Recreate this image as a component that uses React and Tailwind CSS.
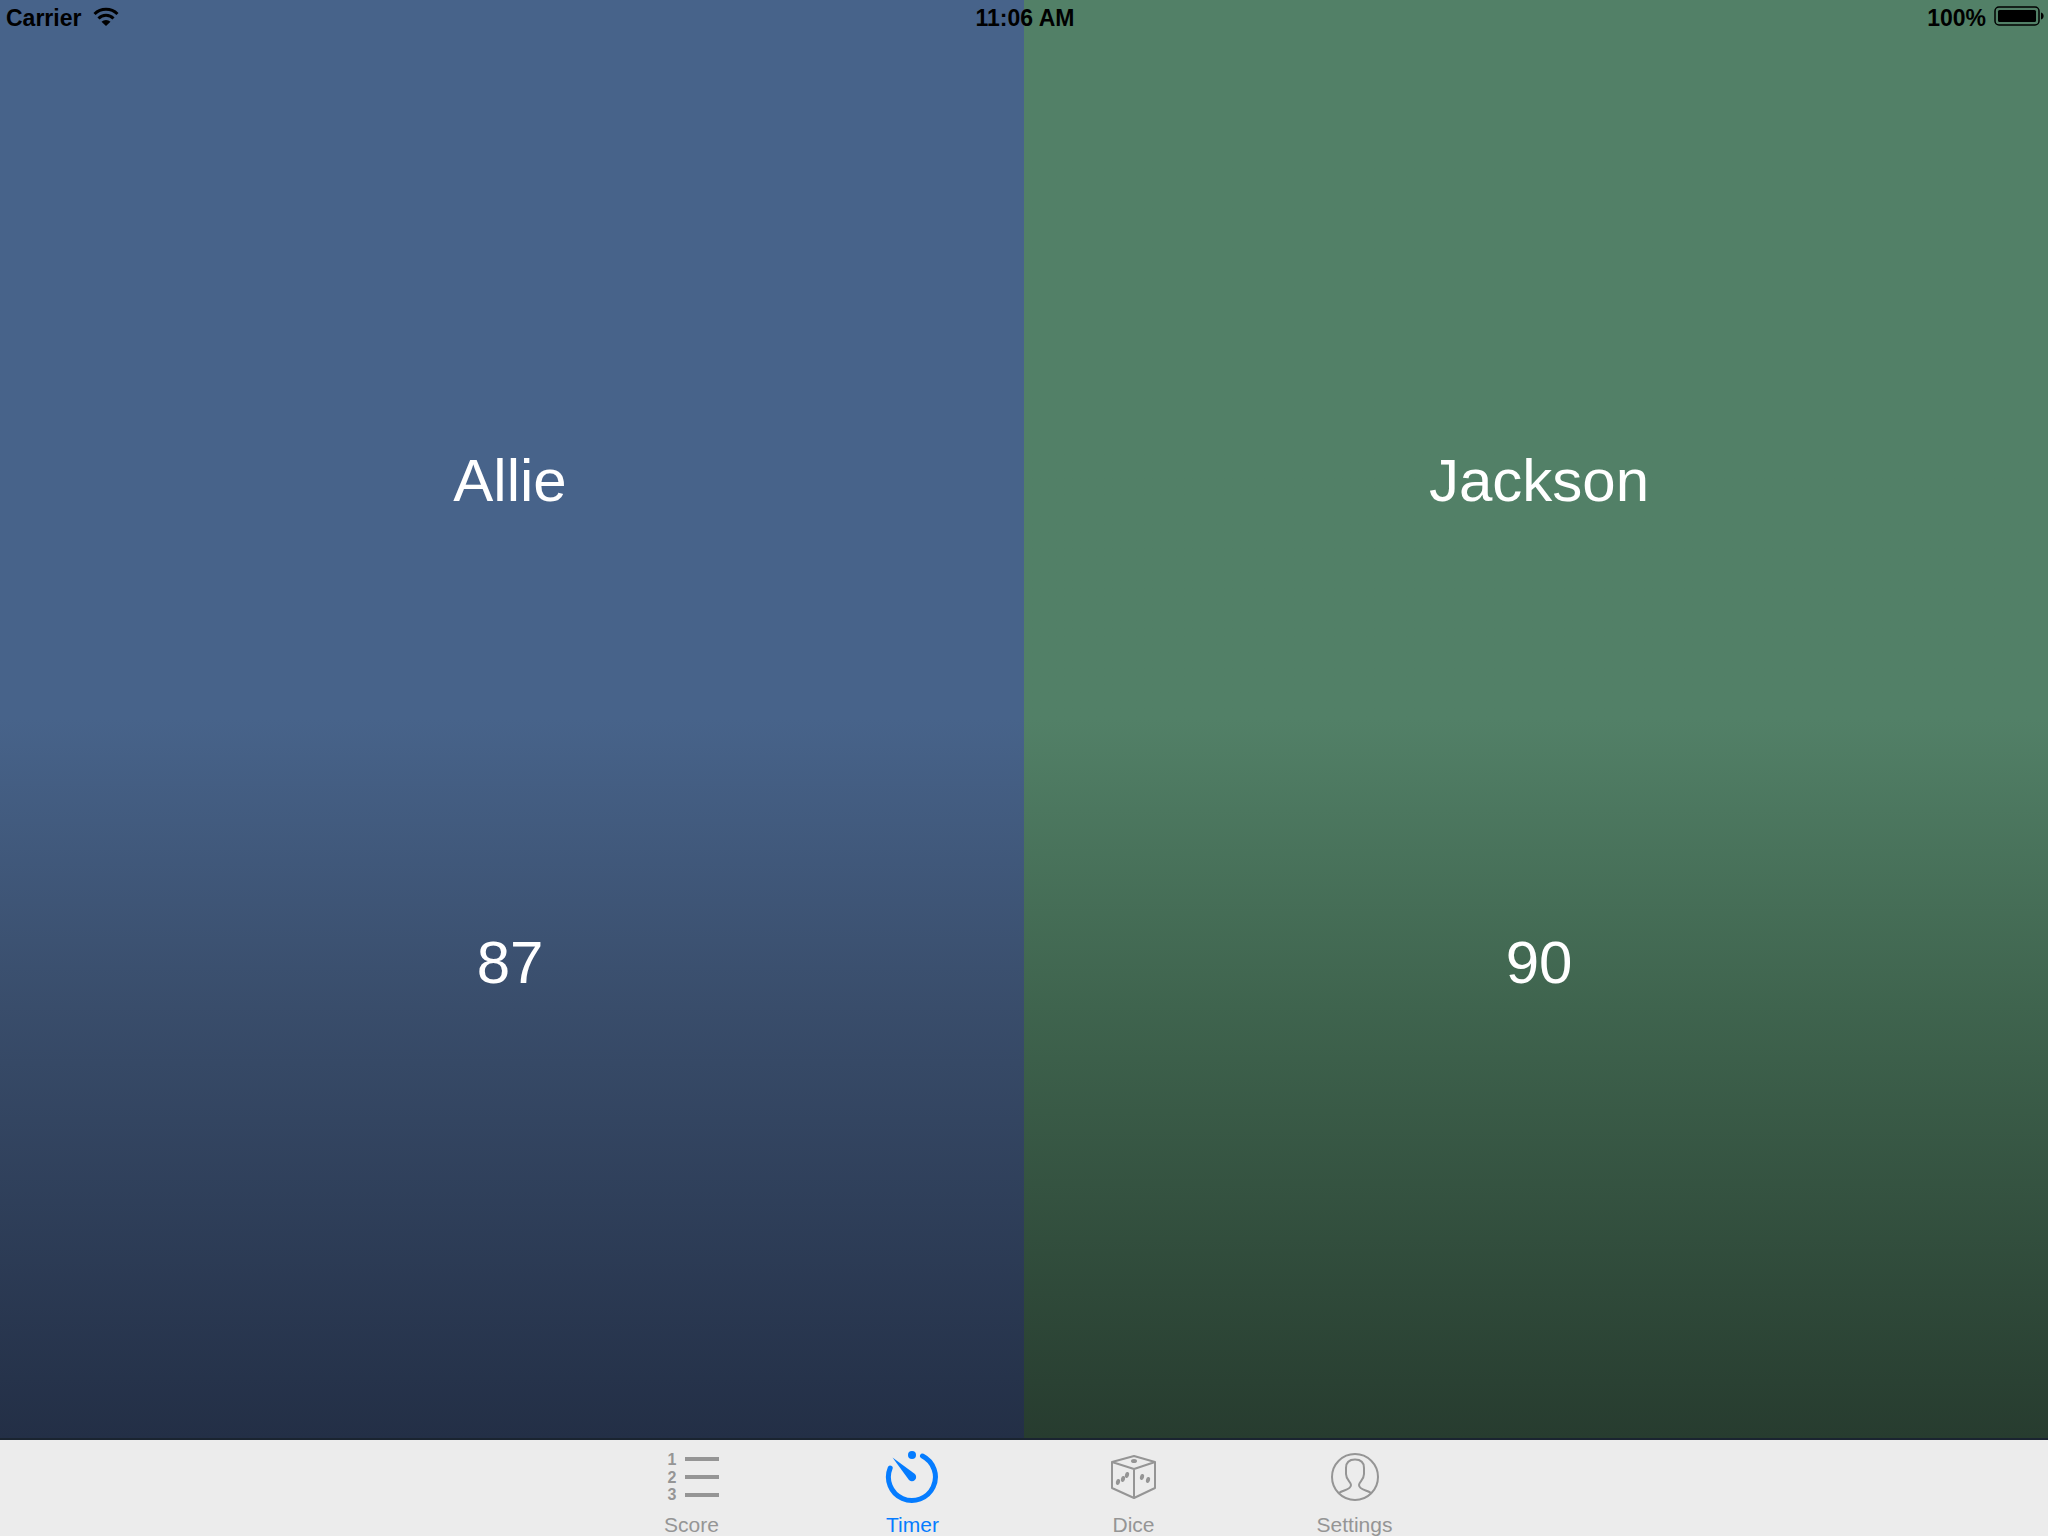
import React, { useState } from "react";

const players = [
  {
    name: "Allie",
    time: 87,
    tone: "pr-1 bg-linear-to-b from-[#47638a] from-50% via-[#394d6b] via-70% to-[#232f46]",
  },
  {
    name: "Jackson",
    time: 90,
    tone: "pl-1.5 bg-linear-to-b from-[#528067] from-50% via-[#3f644e] via-70% to-[#273c2f]",
  },
];

function ScoreIcon() {
  return (
    <svg viewBox="0 0 57 57" className="h-[57px] w-[57px]" aria-hidden="true">
      <path d="M22 11H56M22 29H56M22 47H56" stroke="currentColor" strokeWidth="4" />
      <g fill="currentColor" fontFamily="Liberation Sans, sans-serif" fontWeight="700" fontSize="16" textAnchor="middle">
        <text x="9" y="17">1</text>
        <text x="9" y="35">2</text>
        <text x="9" y="52">3</text>
      </g>
    </svg>
  );
}

function TimerIcon() {
  return (
    <svg viewBox="0 0 57 57" className="h-[57px] w-[57px]" aria-hidden="true">
      <path d="M38.5 8A23.5 23.5 0 1 1 6.2 20" fill="none" stroke="currentColor" strokeWidth="5" strokeLinecap="round" />
      <circle cx="28" cy="7" r="4" fill="currentColor" />
      <path d="M8.5 9.5L30.6 25.8A4.2 4.2 0 1 1 24.6 31.6Z" fill="currentColor" />
    </svg>
  );
}

function DiceIcon() {
  return (
    <svg viewBox="0 0 57 57" className="h-[57px] w-[57px]" aria-hidden="true">
      <path
        d="M29 8L7 14V40L29 50L50 40V14ZM7 14L29 21L50 14M29 21V50"
        fill="none"
        stroke="currentColor"
        strokeWidth="2"
        strokeLinejoin="round"
      />
      <g fill="currentColor">
        <ellipse cx="29" cy="13" rx="3" ry="2" />
        <ellipse cx="13" cy="34" rx="2" ry="3" transform="rotate(15 13 34)" />
        <ellipse cx="18" cy="31" rx="2" ry="3" transform="rotate(15 18 31)" />
        <ellipse cx="22" cy="27" rx="2" ry="3" transform="rotate(15 22 27)" />
        <ellipse cx="37" cy="29" rx="2" ry="3" transform="rotate(15 37 29)" />
        <ellipse cx="43" cy="32" rx="2" ry="3" transform="rotate(15 43 32)" />
      </g>
    </svg>
  );
}

function SettingsIcon() {
  return (
    <svg viewBox="0 0 57 57" className="h-[57px] w-[57px]" aria-hidden="true">
      <g fill="none" stroke="currentColor" strokeWidth="2">
        <circle cx="29" cy="29" r="23" />
        <path d="M13 45C17 42 25 42 25 37C25 34 20 32 20 26V20C20 14 24 11.500 29 11.500S38 14 38 20V26C38 32 33 34 33 37C33 42 41 42 45 45" />
      </g>
    </svg>
  );
}

const tabs = [
  { label: "Score", Icon: ScoreIcon },
  { label: "Timer", Icon: TimerIcon },
  { label: "Dice", Icon: DiceIcon },
  { label: "Settings", Icon: SettingsIcon },
];

function StatusBar() {
  return (
    <header className="absolute inset-x-0 top-0 grid h-9 grid-cols-3 items-center pr-1 pl-1.5 text-[23px] font-bold text-black">
      <div className="flex items-center gap-3">
        <span>Carrier</span>
        <svg viewBox="0 0 26 20" className="mb-1 h-5 w-[26px]" aria-label="Wi-Fi">
          <g fill="none" stroke="black" strokeWidth="3">
            <path d="M1.500 8A16.500 16.500 0 0 1 24.500 8" />
            <path d="M5.500 12.500A10.500 10.500 0 0 1 20.500 12.500" />
          </g>
          <path d="M13 20L8.500 15.800A6.500 6.500 0 0 1 17.500 15.800Z" />
        </svg>
      </div>
      <span className="text-center">11:06 AM</span>
      <div className="flex items-center justify-end gap-2">
        <span>100%</span>
        <svg viewBox="0 0 50 20" className="mb-1 h-5 w-[50px]" aria-label="Battery full">
          <rect x="1" y="1" width="44" height="18" rx="4" fill="none" stroke="black" strokeWidth="1.500" />
          <rect x="4" y="4" width="38" height="12" rx="1.500" />
          <path d="M47 6.500C50.500 7 50.500 13 47 13.500Z" />
        </svg>
      </div>
    </header>
  );
}

export default function App() {
  const [active, setActive] = useState("Timer");
  return (
    <div className="relative flex min-h-screen flex-col font-['Liberation_Sans',Arial,sans-serif]">
      <StatusBar />
      <main className="grid flex-1 grid-cols-2">
        {players.map((p) => (
          <button key={p.name} type="button" className={`grid grid-rows-6 justify-items-center text-6xl text-white ${p.tone}`}>
            <span className="row-span-2 row-start-2 self-center pt-1">{p.name}</span>
            <span className="row-span-2 row-start-4 self-center pt-2">{p.time}</span>
          </button>
        ))}
      </main>
      <nav className="flex justify-center border-t-2 border-[#1a2430] bg-[#ececec] pr-0.5">
        {tabs.map(({ label, Icon }) => (
          <button
            key={label}
            type="button"
            aria-current={active === label ? "page" : undefined}
            onClick={() => setActive(label)}
            className={`flex w-[221px] flex-col items-center pt-2 ${active === label ? "text-[#057cff]" : "text-[#959595]"}`}
          >
            <Icon />
            <span className="mt-2 text-[21px] leading-[23px]">{label}</span>
          </button>
        ))}
      </nav>
    </div>
  );
}
